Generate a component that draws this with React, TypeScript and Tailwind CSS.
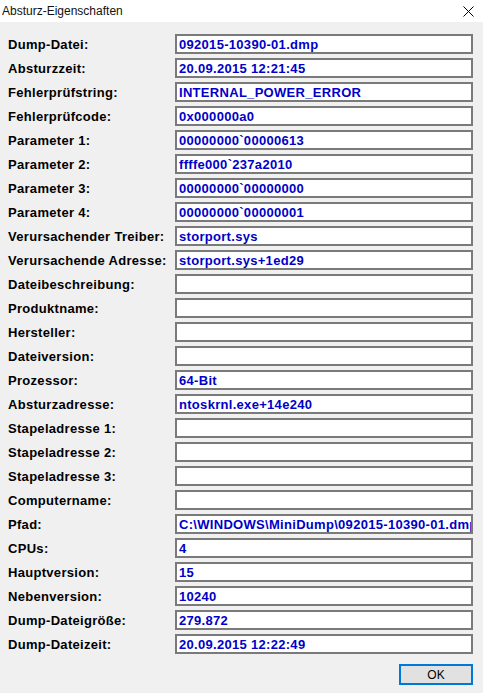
import React from "react";

const rows: [string, string][] = [
  ["Dump-Datei:", "092015-10390-01.dmp"],
  ["Absturzzeit:", "20.09.2015 12:21:45"],
  ["Fehlerprüfstring:", "INTERNAL_POWER_ERROR"],
  ["Fehlerprüfcode:", "0x000000a0"],
  ["Parameter 1:", "00000000`00000613"],
  ["Parameter 2:", "ffffe000`237a2010"],
  ["Parameter 3:", "00000000`00000000"],
  ["Parameter 4:", "00000000`00000001"],
  ["Verursachender Treiber:", "storport.sys"],
  ["Verursachende Adresse:", "storport.sys+1ed29"],
  ["Dateibeschreibung:", ""],
  ["Produktname:", ""],
  ["Hersteller:", ""],
  ["Dateiversion:", ""],
  ["Prozessor:", "64-Bit"],
  ["Absturzadresse:", "ntoskrnl.exe+14e240"],
  ["Stapeladresse 1:", ""],
  ["Stapeladresse 2:", ""],
  ["Stapeladresse 3:", ""],
  ["Computername:", ""],
  ["Pfad:", "C:\\WINDOWS\\MiniDump\\092015-10390-01.dmp"],
  ["CPUs:", "4"],
  ["Hauptversion:", "15"],
  ["Nebenversion:", "10240"],
  ["Dump-Dateigröße:", "279.872"],
  ["Dump-Dateizeit:", "20.09.2015 12:22:49"],
];

export default function App() {
  return (
    <div className="w-[483px] h-[693px] bg-[#f0f0f0] flex flex-col overflow-hidden">
      <div className="h-[22px] bg-white flex items-center justify-between pl-[2px] pr-[9px]">
        <span
          className="text-[12px] text-[#111] leading-none"
          style={{ fontFamily: '"Liberation Sans", Arial, sans-serif' }}
        >
          Absturz-Eigenschaften
        </span>
        <svg width="11" height="11" viewBox="0 0 11 11" className="mt-[1px]">
          <path d="M0.5 0.5 L10.5 10.5 M10.5 0.5 L0.5 10.5" stroke="#000" strokeWidth="1" />
        </svg>
      </div>
      <div
        className="flex flex-col gap-[4px] pt-[12px] pl-[8px] pr-[10px] tracking-[0.3px]"
        style={{ fontFamily: '"Liberation Sans", Arial, sans-serif' }}
      >
        {rows.map(([label, value]) => (
          <div key={label} className="flex items-center h-[20px]">
            <div className="w-[167px] text-[13px] font-bold text-black leading-none">{label}</div>
            <div className="w-[298px] h-[20px] border-2 border-[#7a7a7a] bg-white flex items-center pl-[2px] overflow-hidden whitespace-nowrap">
              <span className="text-[13px] font-bold text-[#0000c8] leading-none">{value}</span>
            </div>
          </div>
        ))}
      </div>
      <div className="flex justify-end pr-[10px] pt-[10px]">
        <button
          className="w-[74px] h-[21px] border-2 border-[#0078d7] bg-[#e1e1e1] text-[12px] text-black flex items-center justify-center leading-none"
          style={{ fontFamily: '"Liberation Sans", Arial, sans-serif' }}
        >
          OK
        </button>
      </div>
    </div>
  );
}
